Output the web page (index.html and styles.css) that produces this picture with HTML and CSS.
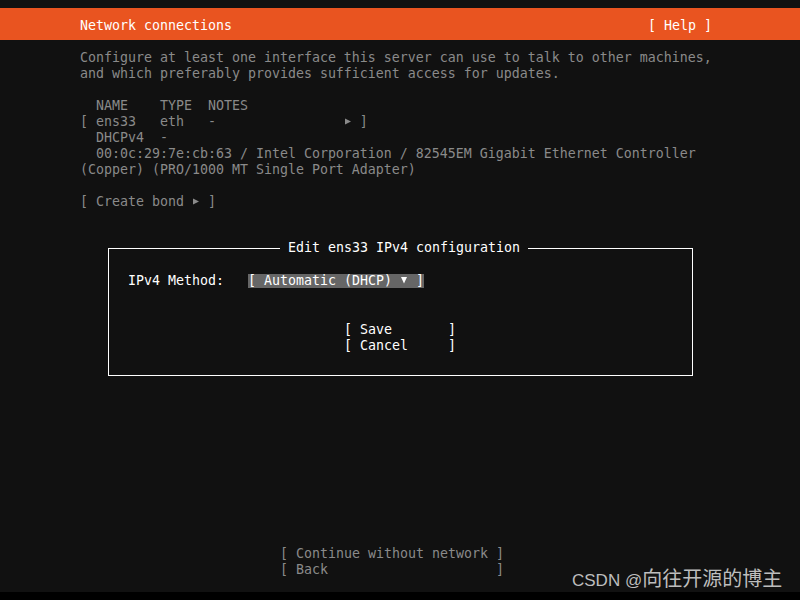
FILE: index.html
```html
<!DOCTYPE html>
<html lang="en">
  <head>
    <meta charset="UTF-8" />
    <meta name="viewport" content="width=device-width, initial-scale=1.0" />
    <title>Network connections</title>
    <link rel="stylesheet" href="styles.css">
  </head>
  <body>
    <div class="screen">
      <header class="title-bar">
        <span class="txt">Network connections</span>
        <span class="txt">[ Help ]</span>
      </header>

      <section class="content">
        <div class="line">Configure at least one interface this server can use to talk to other machines,</div>
        <div class="line">and which preferably provides sufficient access for updates.</div>
        <div class="line"> </div>
        <div class="line">  NAME    TYPE  NOTES</div>
        <div class="line">[ ens33   eth   -                <svg class="tri" viewBox="0 0 8 16"><path d="M1 4.5L7 7.5L1 10.5Z" /></svg> ]</div>
        <div class="line">  DHCPv4  -</div>
        <div class="line">  00:0c:29:7e:cb:63 / Intel Corporation / 82545EM Gigabit Ethernet Controller</div>
        <div class="line">(Copper) (PRO/1000 MT Single Port Adapter)</div>
        <div class="line"> </div>
        <div class="line">[ Create bond <svg class="tri" viewBox="0 0 8 16"><path d="M1 4.5L7 7.5L1 10.5Z" /></svg> ]</div>
      </section>

      <fieldset class="dialog">
        <legend class="dialog-title"> Edit ens33 IPv4 configuration </legend>
        <div class="field-row">
          <span class="txt">IPv4 Method:</span>
          <span class="select txt">[ Automatic (DHCP) <svg class="tri" viewBox="0 0 8 14"><path d="M1 3H7L4 9.5Z" /></svg> ]</span>
        </div>
        <div class="dialog-buttons">
          <div class="line">[ Save       ]</div>
          <div class="line">[ Cancel     ]</div>
        </div>
      </fieldset>

      <div class="bottom-buttons">
        <div class="line">[ Continue without network ]</div>
        <div class="line">[ Back                     ]</div>
      </div>

      <div class="bottom-strip"></div>

      <div class="watermark"><span class="wm-latin">CSDN @</span><span class="wm-cjk">向往开源的博主</span></div>
    </div>
  </body>
</html>
```

FILE: styles.css
```css
* {
  box-sizing: border-box;
}

html,
body {
  margin: 0;
  padding: 0;
  background: #111111;
}

.screen {
  position: relative;
  width: 800px;
  height: 600px;
  display: flex;
  flex-direction: column;
  overflow: hidden;
  font-family: "DejaVu Sans Mono", "Liberation Mono", monospace;
  font-size: 13.29px;
  line-height: 16px;
  color: #8a8a8a;
}

.txt,
.line {
  white-space: pre;
}

.title-bar {
  margin-top: 8px;
  height: 32px;
  padding: 10px 88px 6px 80px;
  background: #e95420;
  color: #fff;
  display: flex;
  justify-content: space-between;
  flex-shrink: 0;
}

.content {
  padding: 10px 0 0 80px;
}

.line {
  height: 16px;
}

.tri {
  width: 8px;
  height: 16px;
  vertical-align: top;
  fill: currentColor;
}

.dialog {
  margin: 30px 0 0 108px;
  width: 585px;
  padding: 0 0 21px 0;
  border: 1px solid #fff;
  color: #fff;
  min-width: 0;
  flex-shrink: 0;
}

.dialog-title {
  margin-left: 171px;
  padding: 0;
  height: 16px;
  white-space: pre;
}

.field-row {
  display: flex;
  align-items: center;
  gap: 24px;
  height: 16px;
  margin-top: 17px;
  padding-left: 19px;
}

.select {
  background: #666;
  line-height: 14px;
  height: 14px;
  overflow: hidden;
}

.select .tri {
  height: 14px;
}

.dialog-buttons {
  margin-top: 33px;
  padding-left: 235px;
}

.bottom-buttons {
  margin: auto 0 14px 280px;
}

.bottom-strip {
  height: 8px;
  background: #000;
  flex-shrink: 0;
}

.watermark {
  position: absolute;
  left: 572px;
  top: 568px;
  line-height: 20px;
  color: #bdbdbd;
  font-family: "Liberation Sans", "Noto Sans CJK SC", sans-serif;
  white-space: nowrap;
}

.wm-latin {
  font-size: 17px;
}

.wm-cjk {
  font-family: "Noto Sans CJK SC", sans-serif;
  font-size: 20px;
}
```
